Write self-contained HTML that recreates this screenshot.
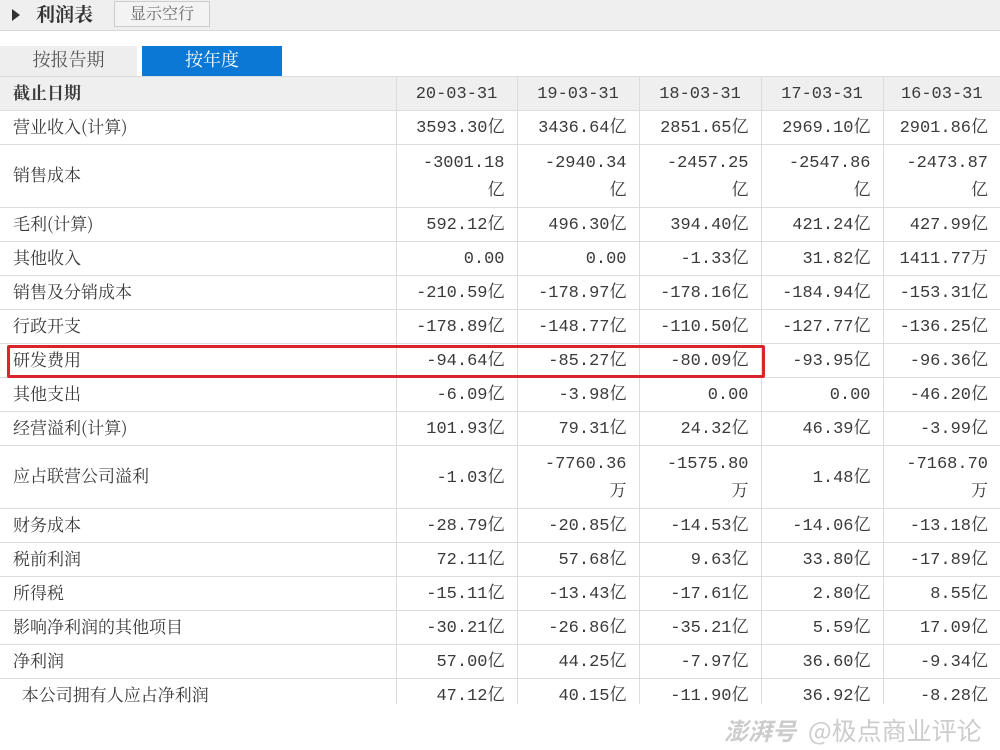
<!DOCTYPE html>
<html><head><meta charset="utf-8"><style>
*{margin:0;padding:0;box-sizing:border-box}
body{width:1000px;height:750px;background:#fff;position:relative;overflow:hidden;font-family:"Liberation Mono","Noto Serif CJK SC",monospace;color:#3a3a3a}
.top{position:absolute;left:0;top:0;width:1000px;height:31px;background:#efefef;border-bottom:1px solid #d8d8d8}
.tri{position:absolute;left:12px;top:9px;width:0;height:0;border-left:8px solid #333;border-top:6px solid transparent;border-bottom:6px solid transparent}
.title{position:absolute;left:36px;top:0px;font:bold 19px "Noto Serif CJK SC",serif;color:#333;line-height:28px}
.btn{position:absolute;left:114px;top:1px;width:96px;height:26px;border:1px solid #ccc;background:#f3f3f3;font:16px "Noto Serif CJK SC",serif;color:#666;text-align:center;line-height:22px}
.tab1{position:absolute;left:0;top:46px;width:137px;height:30px;background:#eeeeee;font:18px "Noto Serif CJK SC",serif;color:#555;text-align:center;line-height:27px}
.tab2{position:absolute;left:142px;top:46px;width:140px;height:30px;background:#0b78d6;font:18px "Noto Serif CJK SC",serif;color:#fff;text-align:center;line-height:27px}
.wrap{position:absolute;left:0;top:76px;width:1000px;height:628px;overflow:hidden}
table{border-collapse:collapse;table-layout:fixed;width:1000px}
td{border:1px solid #dcdcdc;font-size:17px;text-align:right;padding:3px 12px 0 4px;line-height:28px;vertical-align:middle;overflow:hidden;white-space:nowrap}
td:first-child{text-align:left;padding:0 0 4px 13px;font-family:"Noto Serif CJK SC",serif;border-left:none}
td:last-child{border-right:none}
tr{height:34px}
tr.t{height:63px}
tr.h td{background:#efefef;font-weight:bold}
tr.h td:not(:first-child){font-weight:normal;text-align:center;padding:3px 0 0 0}
.red{position:absolute;left:7px;top:345px;width:758px;height:33px;border:3px solid #d9232d;border-radius:2px}
.wm{position:absolute;left:724px;top:713px;font:italic bold 24px "Noto Sans CJK SC",sans-serif;color:#ccc;line-height:34px}
.wm2{position:absolute;left:808px;top:713px;font:25px "Noto Sans CJK SC",sans-serif;color:#ccc;line-height:34px}
</style></head><body>
<div class="top"><div class="tri"></div><div class="title">利润表</div><div class="btn">显示空行</div></div>
<div class="tab1">按报告期</div><div class="tab2">按年度</div>
<div class="wrap"><table>
<colgroup><col style="width:396px"><col style="width:121px"><col style="width:122px"><col style="width:122px"><col style="width:122px"><col style="width:117px"></colgroup>
<tr class="h"><td>截止日期</td><td>20-03-31</td><td>19-03-31</td><td>18-03-31</td><td>17-03-31</td><td>16-03-31</td></tr>
<tr><td>营业收入(计算)</td><td>3593.30亿</td><td>3436.64亿</td><td>2851.65亿</td><td>2969.10亿</td><td>2901.86亿</td></tr>
<tr class="t"><td>销售成本</td><td>-3001.18<br>亿</td><td>-2940.34<br>亿</td><td>-2457.25<br>亿</td><td>-2547.86<br>亿</td><td>-2473.87<br>亿</td></tr>
<tr><td>毛利(计算)</td><td>592.12亿</td><td>496.30亿</td><td>394.40亿</td><td>421.24亿</td><td>427.99亿</td></tr>
<tr><td>其他收入</td><td>0.00</td><td>0.00</td><td>-1.33亿</td><td>31.82亿</td><td>1411.77万</td></tr>
<tr><td>销售及分销成本</td><td>-210.59亿</td><td>-178.97亿</td><td>-178.16亿</td><td>-184.94亿</td><td>-153.31亿</td></tr>
<tr><td>行政开支</td><td>-178.89亿</td><td>-148.77亿</td><td>-110.50亿</td><td>-127.77亿</td><td>-136.25亿</td></tr>
<tr><td>研发费用</td><td>-94.64亿</td><td>-85.27亿</td><td>-80.09亿</td><td>-93.95亿</td><td>-96.36亿</td></tr>
<tr><td>其他支出</td><td>-6.09亿</td><td>-3.98亿</td><td>0.00</td><td>0.00</td><td>-46.20亿</td></tr>
<tr><td>经营溢利(计算)</td><td>101.93亿</td><td>79.31亿</td><td>24.32亿</td><td>46.39亿</td><td>-3.99亿</td></tr>
<tr class="t"><td>应占联营公司溢利</td><td>-1.03亿</td><td>-7760.36<br>万</td><td>-1575.80<br>万</td><td>1.48亿</td><td>-7168.70<br>万</td></tr>
<tr><td>财务成本</td><td>-28.79亿</td><td>-20.85亿</td><td>-14.53亿</td><td>-14.06亿</td><td>-13.18亿</td></tr>
<tr><td>税前利润</td><td>72.11亿</td><td>57.68亿</td><td>9.63亿</td><td>33.80亿</td><td>-17.89亿</td></tr>
<tr><td>所得税</td><td>-15.11亿</td><td>-13.43亿</td><td>-17.61亿</td><td>2.80亿</td><td>8.55亿</td></tr>
<tr><td>影响净利润的其他项目</td><td>-30.21亿</td><td>-26.86亿</td><td>-35.21亿</td><td>5.59亿</td><td>17.09亿</td></tr>
<tr><td>净利润</td><td>57.00亿</td><td>44.25亿</td><td>-7.97亿</td><td>36.60亿</td><td>-9.34亿</td></tr>
<tr><td>&nbsp;&nbsp;本公司拥有人应占净利润</td><td>47.12亿</td><td>40.15亿</td><td>-11.90亿</td><td>36.92亿</td><td>-8.28亿</td></tr>
</table></div>
<div class="red"></div>
<div class="wm">澎湃号</div><div class="wm2">@极点商业评论</div>
</body></html>
